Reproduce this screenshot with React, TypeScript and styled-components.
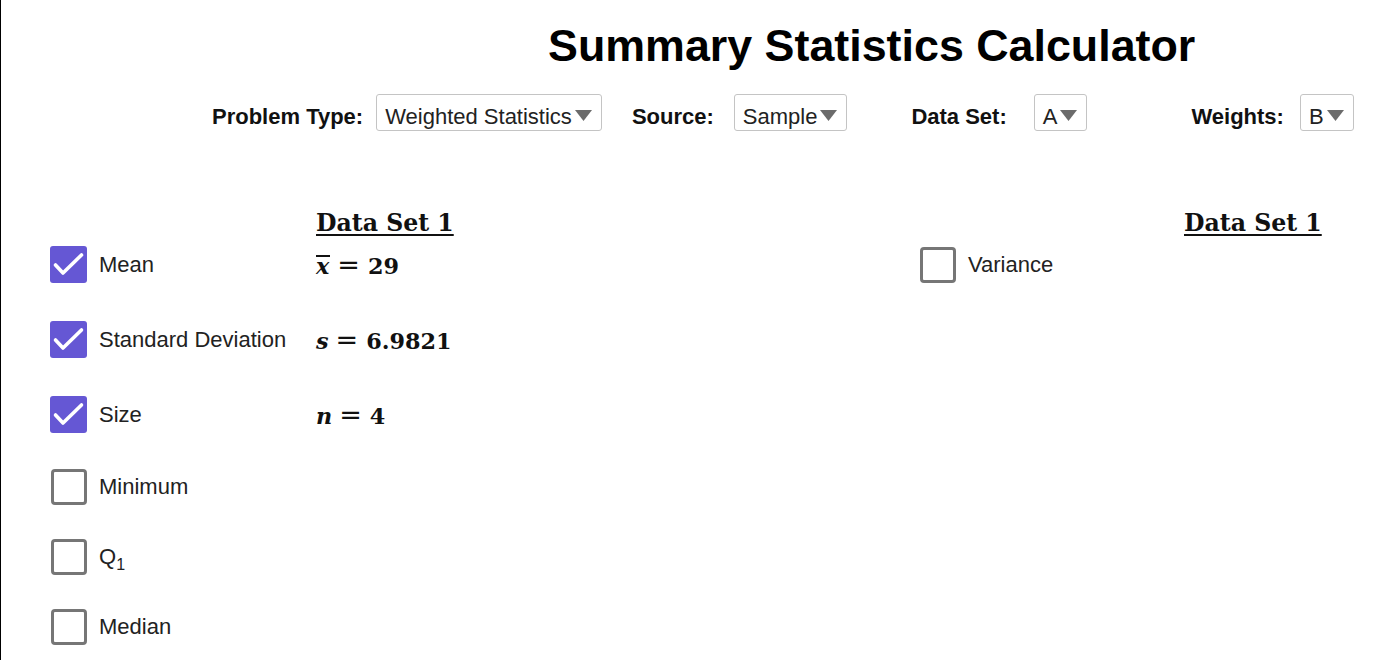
import React from "react";
import styled, { createGlobalStyle } from "styled-components";

const Global = createGlobalStyle`
  html, body { margin: 0; padding: 0; background: #ffffff; }
  body { font-family: "Liberation Sans", Arial, sans-serif; color: #111; }
`;

const Page = styled.div`
  min-height: 660px;
  box-sizing: border-box;
  border-left: 1px solid #000;
  overflow: hidden;
`;

const Title = styled.h1`
  margin: 19px 0 0 547px;
  font-size: 44.8px;
  line-height: 52px;
  font-weight: 700;
  color: #000;
  white-space: nowrap;
`;

const Controls = styled.div`
  display: flex;
  align-items: center;
  margin-top: 23px;
  padding-left: 211px;
  height: 37px;
`;

const Field = styled.div<{ $ml: number; $gap: number }>`
  display: flex;
  align-items: center;
  margin-left: ${(p) => p.$ml}px;
  gap: ${(p) => p.$gap}px;
`;

const FieldLabel = styled.span`
  font-size: 22px;
  font-weight: 700;
  color: #111;
  white-space: nowrap;
  padding-top: 9px;
`;

const SelectBox = styled.div`
  display: flex;
  align-items: center;
  height: 37px;
  box-sizing: border-box;
  padding: 8px 9px 0 8px;
  border: 1px solid #c4c4c4;
  border-radius: 3px;
  font-size: 22px;
  color: #222;
  white-space: nowrap;
`;

const Caret = styled.svg`
  margin-left: 3px;
  width: 17px;
  height: 12px;
  flex: none;
  margin-top: -4px;
`;

const Stats = styled.div`
  margin-top: 59px;
  padding-left: 49px;
  display: flex;
  flex-direction: column;
`;

const Row = styled.div<{ $h: number }>`
  display: grid;
  grid-template-columns: 266px 603px 265px 1fr;
  align-items: center;
  height: ${(p) => p.$h}px;
`;

const HeaderRow = styled.div`
  display: grid;
  grid-template-columns: 266px 603px 265px 1fr;
  align-items: end;
  height: 37px;
`;

const HeaderText = styled.span`
  font-family: "DejaVu Serif", "Liberation Serif", serif;
  font-weight: 700;
  font-size: 23.6px;
  line-height: 23px;
  color: #111;
  text-decoration: underline;
  text-decoration-thickness: 2px;
  text-underline-offset: 3px;
  margin-bottom: -8px;
  white-space: nowrap;
`;

const Item = styled.label`
  display: flex;
  align-items: center;
  gap: 12px;
  font-size: 22px;
  color: #222;
  white-space: nowrap;
`;

const Box = styled.span<{ $on: boolean }>`
  display: flex;
  align-items: center;
  justify-content: center;
  box-sizing: border-box;
  width: ${(p) => (p.$on ? 37 : 36)}px;
  height: ${(p) => (p.$on ? 37 : 36)}px;
  margin-left: ${(p) => (p.$on ? 0 : 1)}px;
  border-radius: ${(p) => (p.$on ? 3 : 4)}px;
  background: ${(p) => (p.$on ? "#6557d4" : "#fff")};
  border: ${(p) => (p.$on ? "none" : "3px solid #767676")};
  flex: none;
`;

const Sub = styled.sub`
  font-size: 16px;
  vertical-align: -6px;
  line-height: 0;
`;

const Math = styled.span`
  font-family: "DejaVu Serif", "Liberation Serif", serif;
  font-weight: 700;
  font-size: 22.3px;
  color: #111;
  white-space: nowrap;
  display: flex;
  align-items: baseline;
`;

const Var = styled.span<{ $bar?: boolean }>`
  font-style: italic;
  display: inline-block;
  ${(p) =>
    p.$bar
      ? `border-top: 2px solid #111; line-height: 17px; padding: 1px 1px 0 0;`
      : ""}
`;

const Eq = styled.span`
  font-weight: 400;
  font-family: "DejaVu Sans", sans-serif;
  font-size: 27px;
  margin: 0 8px 0 7px;
  line-height: 1;
`;

const CaretIcon = () => (
  <Caret viewBox="0 0 17 12">
    <polygon points="0,1 17,1 8.5,12" fill="#6b6b6b" />
  </Caret>
);

const Check = ({ on }: { on: boolean }) => (
  <Box $on={on}>
    {on && (
      <svg width="37" height="37" viewBox="0 0 37 37">
        <polyline
          points="5.5,19 13,27 31.5,9"
          fill="none"
          stroke="#fff"
          strokeWidth="3.6"
          strokeLinecap="round"
          strokeLinejoin="round"
        />
      </svg>
    )}
  </Box>
);

const Select = ({ value }: { value: string }) => (
  <SelectBox>
    {value}
    <CaretIcon />
  </SelectBox>
);

const Formula = ({ v, bar, value }: { v: string; bar?: boolean; value: string }) => (
  <Math>
    <Var $bar={bar}>{v}</Var>
    <Eq>=</Eq>
    <span>{value}</span>
  </Math>
);

type Stat = { label: React.ReactNode; on: boolean; v?: string; bar?: boolean; value?: string };

const left: Stat[] = [
  { label: "Mean", on: true, v: "x", bar: true, value: "29" },
  { label: "Standard Deviation", on: true, v: "s", value: "6.9821" },
  { label: "Size", on: true, v: "n", value: "4" },
  { label: "Minimum", on: false },
  { label: <>Q<Sub>1</Sub></>, on: false },
  { label: "Median", on: false },
];

export default function App() {
  return (
    <>
      <Global />
      <Page>
        <Title>Summary Statistics Calculator</Title>
        <Controls>
          <Field $ml={0} $gap={13}>
            <FieldLabel>Problem Type:</FieldLabel>
            <Select value="Weighted Statistics" />
          </Field>
          <Field $ml={30} $gap={20}>
            <FieldLabel>Source:</FieldLabel>
            <Select value="Sample" />
          </Field>
          <Field $ml={64} $gap={27}>
            <FieldLabel>Data Set:</FieldLabel>
            <Select value="A" />
          </Field>
          <Field $ml={104} $gap={16}>
            <FieldLabel>Weights:</FieldLabel>
            <Select value="B" />
          </Field>
        </Controls>
        <Stats>
          <HeaderRow>
            <span />
            <HeaderText>Data Set 1</HeaderText>
            <span />
            <HeaderText>Data Set 1</HeaderText>
          </HeaderRow>
          {left.map((s, i) => (
            <Row key={i} $h={s.value ? 75 : 70}>
              <Item>
                <Check on={s.on} />
                <span>{s.label}</span>
              </Item>
              <div>{s.value && <Formula v={s.v!} bar={s.bar} value={s.value} />}</div>
              {i === 0 ? (
                <Item>
                  <Check on={false} />
                  <span>Variance</span>
                </Item>
              ) : (
                <span />
              )}
              <span />
            </Row>
          ))}
        </Stats>
      </Page>
    </>
  );
}
